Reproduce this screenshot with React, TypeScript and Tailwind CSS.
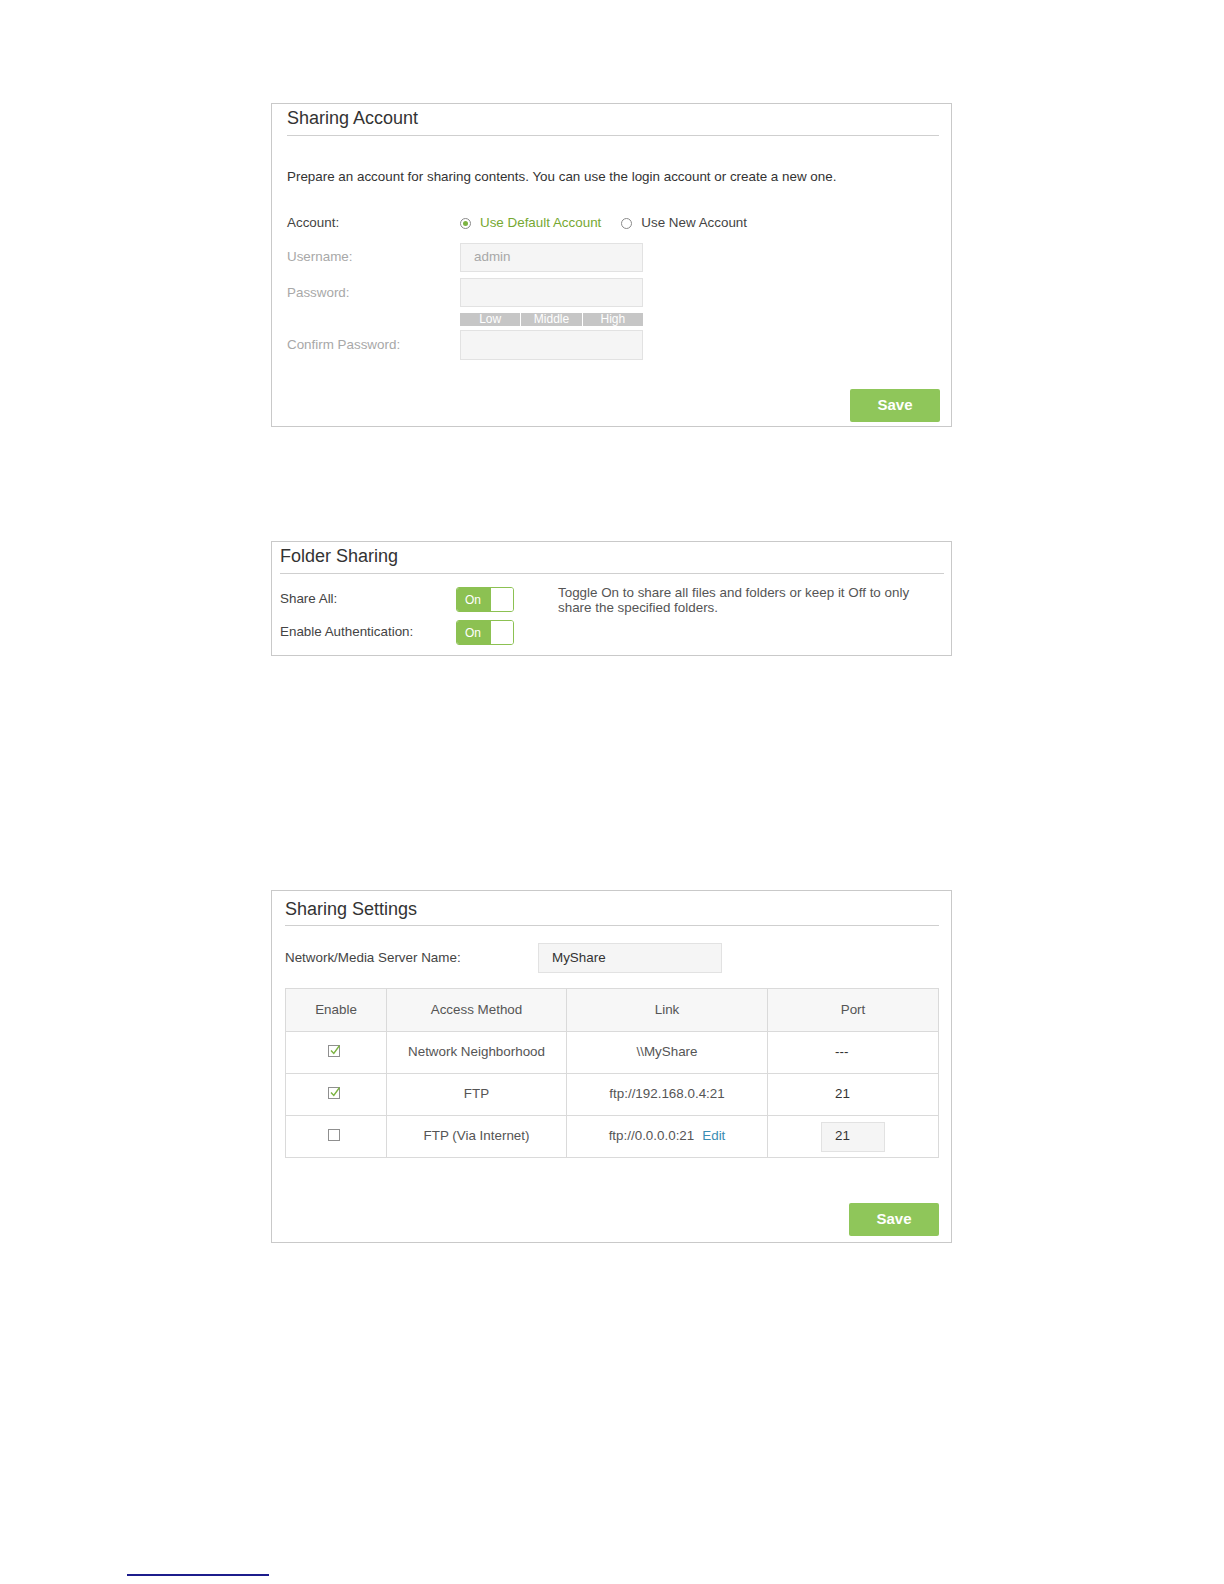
import React from 'react';

const FONT = "font-['Liberation_Sans',Arial,sans-serif]";

function Toggle() {
  return (
    <div className="flex h-[25px] w-[58px] overflow-hidden rounded-[3px] border border-[#8cc152] bg-white">
      <div className="flex w-[34px] items-center justify-center bg-[#8cc152] pr-[2px] text-[12px] text-white">On</div>
      <div className="flex-1 bg-white" />
    </div>
  );
}

function Radio({ checked }: { checked?: boolean }) {
  return (
    <span className="flex h-[11px] w-[11px] items-center justify-center rounded-full border border-[#8a8a8a] bg-white">
      {checked && <span className="h-[5px] w-[5px] rounded-full bg-[#7cb342]" />}
    </span>
  );
}

function Checkbox({ checked }: { checked?: boolean }) {
  return (
    <span className="relative inline-block h-[12px] w-[12px] border border-[#8f8f8f] bg-white">
      {checked && (
        <svg viewBox="0 0 12 12" className="absolute -top-[2px] left-[0px] h-[12px] w-[12px]">
          <path d="M2 6.5 L4.8 9.5 L10.5 1.5" fill="none" stroke="#7cb342" strokeWidth="1.4" />
        </svg>
      )}
    </span>
  );
}

function SaveButton() {
  return (
    <button className="h-[33px] w-[90px] rounded-[2px] bg-[#8fc65a] text-[15px] font-bold text-white">Save</button>
  );
}

function Field({ value, className }: { value?: string; className?: string }) {
  return (
    <div className={`flex h-[29px] w-[183px] items-center border border-[#e2e2e2] bg-[#f5f5f5] pl-[13px] text-[13.4px] ${className ?? ''}`}>
      {value}
    </div>
  );
}

const rows = [
  { on: true, method: 'Network Neighborhood', link: '\\\\MyShare', port: '---', edit: false, input: false },
  { on: true, method: 'FTP', link: 'ftp://192.168.0.4:21', port: '21', edit: false, input: false },
  { on: false, method: 'FTP (Via Internet)', link: 'ftp://0.0.0.0:21', port: '21', edit: true, input: true },
];

export default function App() {
  return (
    <div className={`min-h-[1584px] w-[1224px] bg-white pt-[103px] text-[#444] ${FONT}`}>
      {/* Sharing Account */}
      <section className="ml-[271px] w-[681px] border border-[#c9c9c9] pb-[4px]">
        <div className="ml-[15px] mr-[12px] h-[32px] border-b border-[#cfcfcf] text-[18px] leading-[28px] text-[#333]">
          Sharing Account
        </div>
        <p className="ml-[15px] mt-[32px] text-[13.4px] leading-[18px] text-[#333]">
          Prepare an account for sharing contents. You can use the login account or create a new one.
        </p>
        <div className="ml-[15px] mt-[27px] flex h-[20px] items-center text-[13.4px]">
          <span className="w-[173px] text-[#444]">Account:</span>
          <span className="flex items-center gap-[9px] text-[#76a832]">
            <Radio checked />
            Use Default Account
          </span>
          <span className="ml-[20px] flex items-center gap-[9px] text-[#444]">
            <Radio />
            Use New Account
          </span>
        </div>
        <div className="ml-[15px] mt-[10px] flex flex-col text-[13.4px] text-[#a8a8a8]">
          <div className="flex items-center">
            <span className="w-[173px]">Username:</span>
            <Field value="admin" className="text-[#a8a8a8]" />
          </div>
          <div className="mt-[6px] flex items-start">
            <span className="w-[173px] leading-[29px]">Password:</span>
            <div className="flex flex-col">
              <Field />
              <div className="mt-[6px] flex h-[13px] w-[183px] gap-[1px] text-[12px] leading-[13px] text-white">
                <span className="flex-1 bg-[#c6c6c6] text-center">Low</span>
                <span className="flex-1 bg-[#c6c6c6] text-center">Middle</span>
                <span className="flex-1 bg-[#c6c6c6] text-center">High</span>
              </div>
            </div>
          </div>
          <div className="mt-[4px] flex items-center">
            <span className="w-[173px]">Confirm Password:</span>
            <Field className="h-[30px]" />
          </div>
        </div>
        <div className="mr-[11px] mt-[29px] flex justify-end">
          <SaveButton />
        </div>
      </section>

      {/* Folder Sharing */}
      <section className="ml-[271px] mt-[114px] w-[681px] border border-[#c9c9c9] pb-[10px]">
        <div className="ml-[8px] mr-[7px] h-[32px] border-b border-[#cfcfcf] pt-[1px] text-[18px] leading-[26px] text-[#333]">
          Folder Sharing
        </div>
        <div className="ml-[8px] mt-[13px] flex text-[13.4px]">
          <div className="flex flex-col gap-[8px]">
            <div className="flex items-center">
              <span className="w-[176px]">Share All:</span>
              <Toggle />
            </div>
            <div className="flex items-center">
              <span className="w-[176px]">Enable Authentication:</span>
              <Toggle />
            </div>
          </div>
          <p className="ml-[44px] mt-[-2px] w-[372px] text-[13.4px] leading-[15px] text-[#555]">
            Toggle On to share all files and folders or keep it Off to only share the specified folders.
          </p>
        </div>
      </section>

      {/* Sharing Settings */}
      <section className="ml-[271px] mt-[234px] w-[681px] border border-[#c9c9c9] pb-[6px]">
        <div className="ml-[13px] mr-[12px] h-[35px] border-b border-[#cfcfcf] pt-[6px] text-[18px] leading-[24px] text-[#333]">
          Sharing Settings
        </div>
        <div className="ml-[13px] mt-[17px] flex items-center text-[13.4px]">
          <span className="w-[253px]">Network/Media Server Name:</span>
          <Field value="MyShare" className="h-[30px] w-[184px] text-[#333]" />
        </div>
        <table className="ml-[13px] mt-[15px] w-[654px] border-collapse text-[13.4px] text-[#555]">
          <thead>
            <tr className="h-[43px] bg-[#f7f7f7]">
              <th className="w-[101px] border border-[#dadada] font-normal">Enable</th>
              <th className="w-[180px] border border-[#dadada] font-normal">Access Method</th>
              <th className="w-[201px] border border-[#dadada] font-normal">Link</th>
              <th className="border border-[#dadada] font-normal">Port</th>
            </tr>
          </thead>
          <tbody>
            {rows.map((r) => (
              <tr key={r.method} className="h-[42px]">
                <td className="border border-[#dadada] text-center align-middle">
                  <span className="inline-flex -translate-x-[2px] translate-y-[1px]"><Checkbox checked={r.on} /></span>
                </td>
                <td className="border border-[#dadada] text-center">{r.method}</td>
                <td className="border border-[#dadada] text-center">
                  {r.link}
                  {r.edit && <span className="ml-[8px] text-[#3a8db3]">Edit</span>}
                </td>
                <td className="border border-[#dadada]">
                  <div className="mx-auto w-[64px]">
                    {r.input ? (
                      <div className="flex h-[30px] items-center border border-[#e2e2e2] bg-[#f5f5f5] pl-[13px] text-[#333]">{r.port}</div>
                    ) : (
                      <span className="pl-[14px] text-[#333]">{r.port}</span>
                    )}
                  </div>
                </td>
              </tr>
            ))}
          </tbody>
        </table>
        <div className="mr-[12px] mt-[45px] flex justify-end">
          <SaveButton />
        </div>
      </section>

      <div className="ml-[127px] mt-[331px] h-[2px] w-[142px] bg-[#1c1c8c]" />
    </div>
  );
}
